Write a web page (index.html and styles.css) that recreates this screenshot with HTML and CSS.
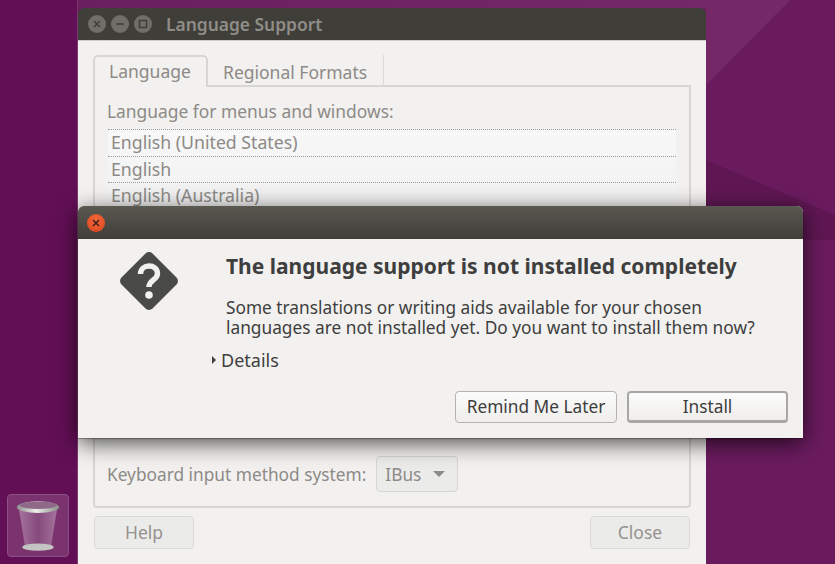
FILE: index.html
```html
<!DOCTYPE html>
<html lang="en">
<head>
<meta charset="utf-8">
<title>Language Support</title>
<link rel="stylesheet" href="styles.css">
</head>
<body>
<div class="desktop">
  <svg class="wallpaper" viewBox="0 0 835 564" preserveAspectRatio="none" aria-hidden="true">
    <defs>
      <linearGradient id="wp" x1="0" y1="0" x2="1" y2="0">
        <stop offset="0" stop-color="#6a1f5f"/>
        <stop offset="1" stop-color="#752968"/>
      </linearGradient>
    </defs>
    <polygon points="78,0 790,0 706,85 706,8 78,8" fill="url(#wp)"/>
    <polygon points="706,160 835,215 835,240 706,240" fill="#5f1753"/>
  </svg>
  <aside class="launcher">
    <div class="tile">
      <svg class="trash" viewBox="0 0 50 58" aria-hidden="true">
        <defs>
          <linearGradient id="bin" x1="0" y1="0" x2="1" y2="0">
            <stop offset="0" stop-color="#a5749d"/>
            <stop offset=".5" stop-color="#854a7c"/>
            <stop offset="1" stop-color="#a5749d"/>
          </linearGradient>
          <linearGradient id="rim" x1="0" y1="0" x2="1" y2="0">
            <stop offset="0" stop-color="#8e8e8c"/>
            <stop offset=".45" stop-color="#efefed"/>
            <stop offset="1" stop-color="#8a8a88"/>
          </linearGradient>
        </defs>
        <path d="M4 9 L11 52 H39 L46 9 Z" fill="url(#bin)"/>
        <ellipse cx="25" cy="52" rx="17" ry="4" fill="#c4c4c2"/>
        <ellipse cx="25" cy="8.5" rx="23" ry="6.5" fill="url(#rim)"/>
        <ellipse cx="25" cy="6.5" rx="20" ry="4" fill="#8e6a88"/>
      </svg>
    </div>
  </aside>

  <section class="window main-window">
    <header class="titlebar">
      <div class="controls">
        <span class="ctl">
          <svg viewBox="0 0 18 18" aria-hidden="true"><path d="M6 6l6 6M12 6l-6 6" stroke="#3f3e39" stroke-width="1.5" fill="none"/></svg>
        </span>
        <span class="ctl">
          <svg viewBox="0 0 18 18" aria-hidden="true"><path d="M5 9h8" stroke="#3f3e39" stroke-width="1.5" fill="none"/></svg>
        </span>
        <span class="ctl">
          <svg viewBox="0 0 18 18" aria-hidden="true"><rect x="5.5" y="5.5" width="7" height="7" stroke="#3f3e39" stroke-width="1.5" fill="none"/></svg>
        </span>
      </div>
      <h1 class="window-title">Language Support</h1>
    </header>
    <div class="window-body">
      <div class="tabs">
        <div class="tab active">Language</div>
        <div class="tab">Regional Formats</div>
      </div>
      <div class="tab-panel">
        <div class="panel-top">
          <div class="field-label">Language for menus and windows:</div>
          <ul class="lang-list">
            <li>English (United States)</li>
            <li>English</li>
            <li>English (Australia)</li>
          </ul>
        </div>
        <div class="input-row">
          <span>Keyboard input method system:</span>
          <div class="select">IBus<i class="caret"></i></div>
        </div>
      </div>
      <div class="window-actions">
        <div class="btn-flat">Help</div>
        <div class="btn-flat">Close</div>
      </div>
    </div>
  </section>

  <section class="window dialog">
    <header class="dialog-bar">
      <span class="close-btn">
        <svg viewBox="0 0 18 18" aria-hidden="true"><path d="M6 6l6 6M12 6l-6 6" stroke="#40201a" stroke-width="1.6" fill="none"/></svg>
      </span>
    </header>
    <div class="dialog-body">
      <svg class="question" viewBox="0 0 60 60" aria-hidden="true">
        <path fill="#4a4a48" d="M26.5 2.5 a5 5 0 0 1 7 0 L57.5 26.5 a5 5 0 0 1 0 7 L33.5 57.5 a5 5 0 0 1 -7 0 L2.5 33.5 a5 5 0 0 1 0 -7 Z"/>
        <path d="M21.5 23 C21.5 12.5 38.5 12.5 38.5 22.5 C38.5 29 30 29 30 36" fill="none" stroke="#f2f1ef" stroke-width="5.4"/>
        <circle cx="30" cy="44" r="3.8" fill="#f2f1ef"/>
      </svg>
      <div class="dialog-text">
        <h2 class="dialog-title">The language support is not installed completely</h2>
        <p class="dialog-msg">Some translations or writing aids available for your chosen<br>languages are not installed yet. Do you want to install them now?</p>
        <div class="details"><i class="arrow"></i>Details</div>
      </div>
    </div>
    <div class="dialog-actions">
      <div class="btn">Remind Me Later</div>
      <div class="btn btn-default">Install</div>
    </div>
  </section>
</div>
</body>
</html>
```
FILE: styles.css
```css
* { box-sizing: border-box; }
html, body { margin: 0; padding: 0; }
body { font-family: "Noto Sans", "Open Sans", sans-serif; }

.desktop {
  position: relative;
  width: 835px;
  height: 564px;
  overflow: hidden;
  background: #6a1b5e;
}
.wallpaper { position: absolute; inset: 0; width: 100%; height: 100%; }

.launcher {
  position: absolute;
  left: 0; top: 0; bottom: 0;
  width: 78px;
  padding: 0 8px 7px 7px;
  background: #620f55;
  border-right: 1px solid #7a3a70;
  display: flex;
  align-items: flex-end;
}
.tile {
  width: 63px;
  height: 63px;
  border-radius: 4px;
  background: #7b3370;
  border: 1px solid #8d5084;
  display: flex;
  align-items: center;
  justify-content: center;
}
.trash { width: 46px; height: 54px; }

.window { position: absolute; color: #8d8a87; }

.main-window {
  left: 78px; top: 8px;
  width: 628px;
  height: 556px;
  display: flex;
  flex-direction: column;
}
.titlebar {
  height: 33px;
  flex: none;
  background: #3f3e39;
  border-radius: 6px 6px 0 0;
  border-bottom: 1px solid #cfcdca;
  display: flex;
  align-items: center;
  padding-left: 10px;
}
.controls { display: flex; gap: 5px; margin-bottom: 1px; }
.ctl {
  width: 18px; height: 18px;
  border-radius: 50%;
  background: #6f6e69;
  display: block;
}
.ctl svg, .close-btn svg { display: block; width: 18px; height: 18px; }
.window-title {
  margin: 0 0 1px 14px;
  font-size: 17.4px;
  font-weight: 600;
  color: #8f8d88;
}

.window-body {
  flex: 1;
  background: #f2f1ef;
  padding: 14px 15px 16px;
  display: flex;
  flex-direction: column;
}
.tabs { display: flex; height: 32px; flex: none; position: relative; z-index: 1; }
.tab {
  padding: 3px 15px 0;
  font-size: 17.5px;
  line-height: 28px;
  border-right: 1px solid #dcdad7;
  border-bottom: 2px solid #d8d6d3;
  width: 176px;
  white-space: nowrap;
  color: #8d8a87;
}
.tab.active {
  width: 115px;
  border: 2px solid #d8d6d3;
  border-bottom: 0;
  border-radius: 5px 5px 0 0;
  padding: 0 14px 0;
}
.tabs::after {
  content: "";
  flex: 1;
  border-bottom: 2px solid #d8d6d3;
}
.tab-panel {
  margin-top: -1px;
  height: 422px;
  flex: none;
  border: 2px solid #d8d6d3;
  border-top: 0;
  border-radius: 0 0 4px 4px;
  padding: 13px 13px 14px 12px;
  display: flex;
  flex-direction: column;
  justify-content: space-between;
}
.field-label { font-size: 17.4px; line-height: 24px; margin-bottom: 6px; }
.lang-list {
  list-style: none;
  margin: 0 0 0 1px;
  padding: 0;
  font-size: 17.7px;
  background: linear-gradient(#f8f8f8, #f0f0f0);
}
.lang-list li {
  height: 26.5px;
  line-height: 24px;
  padding-left: 3px;
  border-top: 1px dotted #9c9c9c;
}
.input-row { display: flex; align-items: center; gap: 10px; font-size: 17.3px; }
.select {
  width: 82px; height: 36px;
  border: 1px solid #d8d6d3;
  border-radius: 4px;
  background: #ebebea;
  display: flex;
  align-items: center;
  justify-content: space-between;
  padding: 0 12px 0 8px;
}
.caret {
  width: 0; height: 0;
  border-left: 6px solid transparent;
  border-right: 6px solid transparent;
  border-top: 6px solid #8d8a87;
}
.window-actions {
  margin-top: 8px;
  padding: 0 1px;
  display: flex;
  justify-content: space-between;
}
.btn-flat {
  width: 100px; height: 33px;
  border: 1px solid #dbd9d6;
  border-radius: 4px;
  background: #ebebea;
  font-size: 17.5px;
  line-height: 31px;
  text-align: center;
  color: #95928f;
}

.dialog {
  left: 78px; top: 206px;
  width: 725px; height: 232px;
  background: #f2f1ef;
  border-radius: 6px 6px 0 0;
  box-shadow: 0 5px 22px rgba(0,0,0,.7), 0 1px 1px rgba(0,0,0,.3);
  display: flex;
  flex-direction: column;
  color: #3e3e3e;
}
.dialog-bar {
  height: 33px;
  flex: none;
  background: linear-gradient(#5a5850, #3f3e39);
  border-radius: 6px 6px 0 0;
  padding: 8px 0 0 9px;
}
.close-btn {
  display: block;
  width: 18px; height: 18px;
  border-radius: 50%;
  background: radial-gradient(circle at 50% 35%, #f4693a, #d8431c);
}
.dialog-body { display: flex; flex: 1; padding: 12px 0 0 41px; }
.question { width: 60px; height: 60px; flex: none; }
.dialog-text { padding-left: 47px; flex: 1; position: relative; }
.dialog-title {
  margin: 0;
  font-size: 21px;
  line-height: 30px;
  font-weight: 700;
  white-space: nowrap;
}
.dialog-msg {
  margin: 17px 0 0;
  font-size: 17.3px;
  line-height: 20px;
  white-space: nowrap;
}
.details {
  margin: 10px 0 0 -5px;
  font-size: 18px;
  line-height: 24px;
  display: flex;
  align-items: center;
}
.arrow {
  position: absolute;
  left: 33px;
  width: 0; height: 0;
  border-top: 4px solid transparent;
  border-bottom: 4px solid transparent;
  border-left: 4px solid #3e3e3e;
}
.dialog-actions {
  flex: none;
  display: flex;
  justify-content: flex-end;
  align-items: center;
  gap: 10px;
  padding: 0 15px 15px 0;
}
.btn {
  width: 162px; height: 32px;
  border: 1px solid #b5b3b0;
  border-radius: 4px;
  background: linear-gradient(#fbfbfb, #efeeec);
  font-size: 17.3px;
  line-height: 30px;
  text-align: center;
  color: #3e3e3e;
}
.btn-default {
  width: 161px;
  border: 2px solid #a9a7a4;
  border-bottom-width: 3px;
  line-height: 28px;
}
```
